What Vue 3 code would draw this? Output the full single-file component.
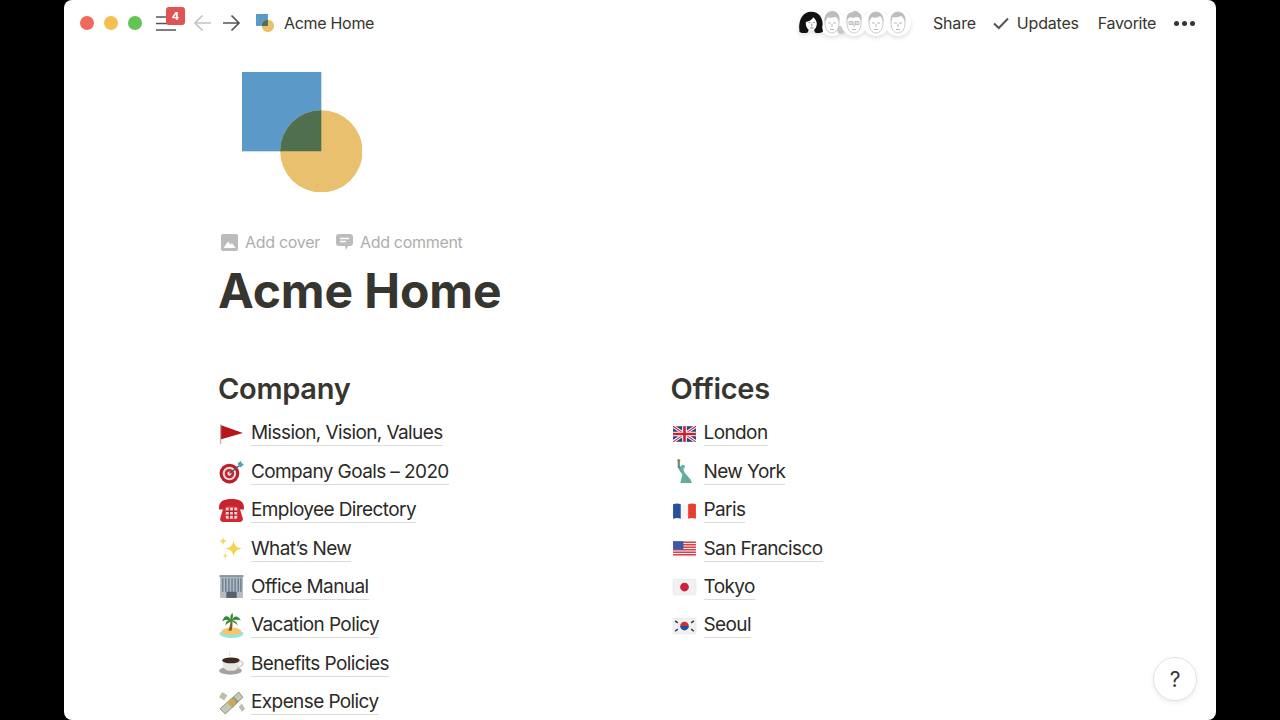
<script setup>
const company = [
  { icon: "flag", label: "Mission, Vision, Values" },
  { icon: "target", label: "Company Goals – 2020" },
  { icon: "phone", label: "Employee Directory" },
  { icon: "sparkles", label: "What’s New" },
  { icon: "office", label: "Office Manual" },
  { icon: "island", label: "Vacation Policy" },
  { icon: "coffee", label: "Benefits Policies" },
  { icon: "money", label: "Expense Policy" },
];

const offices = [
  { icon: "uk", label: "London" },
  { icon: "liberty", label: "New York" },
  { icon: "fr", label: "Paris" },
  { icon: "us", label: "San Francisco" },
  { icon: "jp", label: "Tokyo" },
  { icon: "kr", label: "Seoul" },
];

const columns = [
  { title: "Company", items: company },
  { title: "Offices", items: offices },
];

// hair outline of the four grey portraits
const hair = [
  "M7 13C5 6 10 2 14 2c5 0 9 4 7 11-1-3-2-5-4-5-3 1-6 1-7 0-1 1-2 3-3 5Z",
  "M7 11C6 6 9 3 12 4c2-3 6-2 7 0 3 1 3 5 2 8-1-2-2-4-4-4-3 1-6 1-7 0-1 1-2 2-3 3Z",
  "M7 13C6 6 10 3 14 3c5 0 8 4 7 10-1-3-1-5-3-6-2 2-7 2-8 1-1 1-2 3-3 5Z",
  "M7 13C6 6 10 3 14 3c5 0 8 4 7 10-1-3-2-5-4-6-2 1-6 2-8 1-1 1-1 3-2 5Z",
];
</script>

<template>
  <div class="window">
    <header class="topbar">
      <div class="lights">
        <span class="light light_red"></span>
        <span class="light light_yellow"></span>
        <span class="light light_green"></span>
      </div>
      <div class="menu">
        <svg width="20" height="16" viewBox="0 0 20 16">
          <path d="M0 1h13M0 7.500h13M0 14h20" stroke="#555" stroke-width="1.600" fill="none" />
        </svg>
        <span class="badge">4</span>
      </div>
      <svg class="arrow" width="20" height="18" viewBox="0 0 20 18">
        <path d="M18 9H2M9.500 1.500 2 9l7.500 7.500" stroke="#c4c4c4" stroke-width="1.700" fill="none" />
      </svg>
      <svg class="arrow arrow_next" width="20" height="18" viewBox="0 0 20 18">
        <path d="M2 9h16M10.500 1.500 18 9l-7.500 7.500" stroke="#555" stroke-width="1.700" fill="none" />
      </svg>
      <svg class="page-icon" width="20" height="18" viewBox="0 0 121 121">
        <rect width="80" height="80" fill="#5b99c9" />
        <circle cx="80" cy="80" r="41.500" fill="#e9c06e" />
        <path d="M80 38.500V80H38.500A41.500 41.500 0 0 1 80 38.500Z" fill="#4f6f4f" />
      </svg>
      <span class="crumb">Acme Home</span>

      <div class="avatars">
        <svg class="avatar avatar_first" width="28" height="28" viewBox="-3 -1 31 31">
          <path d="M1 24C-1 14 3 2 14 2c10 0 14 10 12 17 0 2 1 4 1 5-3 2-7 2-9 1l-1-3h-6l-1 3c-3 1-7 1-10-1Z" fill="#111" />
          <path d="M8 13c2 0 6-1 8-5 2 2 4 4 4 7 0 5-3 8-6 8s-7-4-6-10Z" fill="#fff" />
          <path d="M11 14h2M16 14h2M14.500 15v3M12.500 20h4" stroke="#666" stroke-width=".8" fill="none" />
        </svg>
        <svg v-for="(d, i) in hair" :key="d" class="avatar" width="28" height="28" viewBox="0 0 28 28">
          <circle cx="14" cy="14" r="13" fill="#fff" />
          <circle v-if="i === 0" cx="23" cy="21" r="4" fill="#c9c9c9" />
          <path d="M7 14c-1-9 4-11 7-11s8 2 7 11c0 6-3 10-7 10s-7-4-7-10Z" fill="#fff" stroke="#bdbdbd" stroke-width=".8" />
          <path :d="d" fill="#bdbdbd" />
          <path d="M10 14h3M15 14h3M14 15v3M12 20.500h4" stroke="#a8a8a8" stroke-width=".8" fill="none" />
          <path v-if="i === 1" d="M9 12.500h4v3H9ZM15 12.500h4v3h-4Z" stroke="#a8a8a8" stroke-width=".7" fill="none" />
        </svg>
      </div>
      <span class="action action_share">Share</span>
      <svg class="check" width="16" height="13" viewBox="0 0 16 13">
        <path d="M1 6.500 5.800 11 15 1.500" stroke="#555" stroke-width="2" fill="none" />
      </svg>
      <span class="action action_updates">Updates</span>
      <span class="action action_favorite">Favorite</span>
      <div class="dots"><i></i><i></i><i></i></div>
    </header>

    <main class="page">
      <svg class="page-logo" width="121" height="121" viewBox="0 0 121 121">
        <rect width="80" height="80" fill="#5b99c9" />
        <circle cx="80" cy="80" r="41.500" fill="#e9c06e" />
        <path d="M80 38.500V80H38.500A41.500 41.500 0 0 1 80 38.500Z" fill="#4f6f4f" />
      </svg>

      <div class="page-tools">
        <span class="tool">
          <svg width="17" height="17" viewBox="0 0 17 17">
            <rect width="17" height="17" rx="2" fill="#bcbcbc" />
            <path d="M2.500 14 7 7.500l2.500 3L11 9l3.500 5Z" fill="#fff" />
          </svg>
          Add cover
        </span>
        <span class="tool">
          <svg width="17" height="17" viewBox="0 0 17 17">
            <path d="M3 0h11a3 3 0 0 1 3 3v6a3 3 0 0 1-3 3h-2l-2 4-1-4H3a3 3 0 0 1-3-3V3a3 3 0 0 1 3-3Z" fill="#bcbcbc" />
            <path d="M4 4.500h9M4 7.500h6" stroke="#fff" stroke-width="1.400" />
          </svg>
          Add comment
        </span>
      </div>

      <h1 class="title">Acme Home</h1>

      <div class="columns">
        <section v-for="col in columns" :key="col.title" class="column">
          <h2 class="heading">{{ col.title }}</h2>
          <ul class="links">
            <li v-for="item in col.items" :key="item.label" class="link">
              <svg class="emoji" width="27" height="27" viewBox="0 0 26 26">
                <template v-if="item.icon === 'flag'">
                  <path d="M2.500 4v19" stroke="#aaa" stroke-width="1" />
                  <path d="M3 5 24 12.500 3 18.500Z" fill="#b8151b" />
                </template>
                <template v-else-if="item.icon === 'target'">
                  <circle cx="11" cy="15" r="9.500" fill="#b71f2a" />
                  <circle cx="11" cy="15" r="6.500" fill="#f1dcd8" />
                  <circle cx="11" cy="15" r="4.500" fill="#c22632" />
                  <circle cx="11" cy="15" r="2" fill="#f1dcd8" />
                  <path d="M11 15 21 7" stroke="#555" stroke-width="1.200" />
                  <path d="m19 5 3-2 1 2 2 1-3 3-2-1Z" fill="#4ba6b8" />
                </template>
                <template v-else-if="item.icon === 'phone'">
                  <path d="M1 10C1 4 6 2 13 2s12 2 12 8v2h-5l-1-3H7l-1 3H1Z" fill="#c9242d" />
                  <path d="M5 11 7 8h12l2 3 3 10c0 2-1 3-3 3H5c-2 0-3-1-3-3Z" fill="#cf2a33" />
                  <rect x="7.500" y="10" width="11" height="11" rx="1" fill="#f6d5d2" />
                  <path d="M11 10v11M15 10v11M7.500 13.700h11M7.500 17.400h11" stroke="#b3202a" stroke-width="1.300" />
                </template>
                <template v-else-if="item.icon === 'sparkles'">
                  <path d="M15 5c.8 5 2.500 7 8 8-5.500 1-7.200 3-8 8-.8-5-2.500-7-8-8 5.500-1 7.200-3 8-8Z" fill="#f7d352" />
                  <path d="M5 2c.4 2.500 1.200 3.300 3.500 4C6.200 6.700 5.400 7.500 5 10c-.4-2.500-1.200-3.300-3.500-4C3.800 5.300 4.600 4.500 5 2Z" fill="#f6d863" />
                  <path d="M7 17c.3 2 1 2.700 2.500 3C8 20.300 7.300 21 7 23c-.3-2-1-2.700-2.500-3C6 19.700 6.700 19 7 17Z" fill="#f6d863" />
                </template>
                <template v-else-if="item.icon === 'office'">
                  <rect x="2" y="3" width="22" height="21" fill="#b4bcc3" />
                  <rect x="1.500" y="2" width="23" height="2" fill="#8a949c" />
                  <path d="M4.500 5v13M7.500 5v13M10.500 5v13M13.500 5v13M16.500 5v13M19.500 5v13M22 5v13" stroke="#6d8296" stroke-width="1.500" />
                  <rect x="8" y="18" width="10" height="6" fill="#55626e" />
                </template>
                <template v-else-if="item.icon === 'island'">
                  <ellipse cx="13" cy="21" rx="11.500" ry="4" fill="#9be3de" />
                  <ellipse cx="13" cy="18.500" rx="9.500" ry="3.500" fill="#f3c76a" />
                  <path d="M12 9c0 3-1 6-2 9h3c1-3 1-6 1-9Z" fill="#8a5a2c" />
                  <path d="M13 9C10 2 6 3 4 9c3-2 6-2 9 0Zm0 0c2-6 6-6 9-1-3-1-6-1-9 1Zm0 0C10 7 8 8 7 13c2-2 4-3 6-4Zm0 0c3-1 5 0 6 4-2-2-4-3-6-4Zm0 0c-2-4-1-6 1-8 1 3 0 6-1 8Z" fill="#2f8a34" />
                </template>
                <template v-else-if="item.icon === 'coffee'">
                  <ellipse cx="12" cy="20" rx="11" ry="3.800" fill="#a3a3a0" />
                  <path d="M4 10h17c0 6-2 10-8.500 10S4 16 4 10Z" fill="#e8e6e2" />
                  <ellipse cx="12.500" cy="10" rx="8.500" ry="2.800" fill="#3a2a22" />
                  <path d="M20 11c4-1 5 2 3 4s-3 2-5 2" stroke="#cfcdc9" stroke-width="1.400" fill="none" />
                  <path d="M11 2c-1 1 1 2 0 4" stroke="#e4e4e4" stroke-width="1" fill="none" />
                </template>
                <template v-else-if="item.icon === 'money'">
                  <path d="M1 8 4 3l5 3-3 5ZM20 17l3-3 3 5-3 3Z" fill="#b8c0ae" />
                  <path d="M20 3 24 8 7 24l-5-5Z" fill="#c4c9b4" stroke="#6f7a63" stroke-width=".7" />
                  <path d="m10 12 5-5 5 5-6 6Z" fill="#8f9c80" />
                  <circle cx="13.500" cy="13" r="3.500" fill="#cda94f" />
                </template>
                <template v-else-if="item.icon === 'uk'">
                  <rect x="2" y="6" width="22" height="15" fill="#2b3f87" />
                  <path d="m2 6 22 15M24 6 2 21" stroke="#fff" stroke-width="3" />
                  <path d="m2 6 22 15M24 6 2 21" stroke="#c8202f" stroke-width="1" />
                  <path d="M13 6v15M2 13.500h22" stroke="#fff" stroke-width="4.500" />
                  <path d="M13 6v15M2 13.500h22" stroke="#c8202f" stroke-width="2.500" />
                </template>
                <template v-else-if="item.icon === 'liberty'">
                  <path d="M7 8h4l2 6 6 7 1 3H9l2-8-3-4Z" fill="#63ad9f" />
                  <path d="M7.500 2v8" stroke="#4a8f84" stroke-width="2" />
                  <circle cx="7.500" cy="2.500" r="1.500" fill="#8a8a50" />
                  <circle cx="11.500" cy="8.500" r="2" fill="#6db5a8" />
                </template>
                <template v-else-if="item.icon === 'fr'">
                  <path d="M2 7c3-1 5-1 7.500 0v14C7 20 5 20 2 21Z" fill="#2a4f9c" />
                  <path d="M9.500 7c2 .7 4 .7 7 0v14c-3 .7-5 .7-7 0Z" fill="#f5f5f5" />
                  <path d="M16.500 7c3-1 5-1 7.500 0v14c-2.500-1-4.500-1-7.500 0Z" fill="#e63e30" />
                </template>
                <template v-else-if="item.icon === 'us'">
                  <rect x="2" y="6" width="22" height="15" fill="#f3f3f3" />
                  <path d="M2 7h22M2 9.400h22M2 11.800h22M2 14.200h22M2 16.600h22M2 19h22" stroke="#d9414a" stroke-width="1.300" />
                  <rect x="2" y="6" width="10" height="8" fill="#3d5aa8" />
                </template>
                <template v-else-if="item.icon === 'jp'">
                  <rect x="2" y="6" width="22" height="15" rx="1" fill="#f1f1f1" stroke="#dedede" stroke-width=".5" />
                  <circle cx="13" cy="13.500" r="4.200" fill="#d01f3c" />
                </template>
                <template v-else>
                  <rect x="2" y="6" width="22" height="15" rx="1" fill="#f1f1f1" stroke="#dedede" stroke-width=".5" />
                  <path d="M8.800 13.500a4.200 4.200 0 0 1 8.400 0Z" fill="#cd2e3a" />
                  <path d="M8.800 13.500a4.200 4.200 0 0 0 8.400 0Z" fill="#1f4fa0" />
                  <path d="m4 8.500 2.500 2M22 8.500l-2.500 2M4 18.500l2.500-2M22 18.500l-2.500-2" stroke="#333" stroke-width="1.400" />
                </template>
              </svg>
              <span class="link-label">{{ item.label }}</span>
            </li>
          </ul>
        </section>
      </div>
    </main>

    <button class="help" type="button">?</button>
  </div>
</template>

<style>
html,
body {
  margin: 0;
  background: #000;
  overflow: hidden;
}
</style>

<style scoped>
.window {
  position: relative;
  box-sizing: border-box;
  width: 1152px;
  height: 720px;
  margin: 0 auto;
  overflow: hidden;
  border-radius: 8px;
  background: #fff;
  font-family: Inter, "Liberation Sans", sans-serif;
  color: #37352f;
}

.topbar {
  display: flex;
  align-items: center;
  height: 46px;
  padding: 0 21px 0 16px;
  color: #37352f;
  font-size: 16px;
}

.lights {
  display: flex;
  gap: 10px;
}

.light {
  width: 14px;
  height: 14px;
  border-radius: 50%;
}

.light_red {
  background: #ec6a5e;
}

.light_yellow {
  background: #f4bf4f;
}

.light_green {
  background: #61c554;
}

.menu {
  position: relative;
  display: flex;
  margin-left: 14px;
  padding-top: 2px;
}

.badge {
  position: absolute;
  top: -7px;
  left: 10px;
  width: 19px;
  height: 18px;
  border-radius: 3px;
  background: #df5452;
  color: #fff;
  font-size: 11px;
  font-weight: 700;
  line-height: 18px;
  text-align: center;
}

.arrow {
  margin-left: 17px;
}

.arrow_next {
  margin-left: 8px;
}

.page-icon {
  margin-left: 14px;
}

.crumb {
  margin-left: 9px;
  letter-spacing: -0.3px;
}

.avatars {
  display: flex;
  margin-left: auto;
  filter: drop-shadow(0 2px 2px rgba(0, 0, 0, 0.12));
}

.avatar {
  margin-left: -6px;
}

.avatar_first {
  position: relative;
  z-index: 1;
  margin-left: 0;
}

.action {
  letter-spacing: -0.2px;
}

.action_share {
  margin-left: 21px;
}

.check {
  margin-left: 17px;
}

.action_updates {
  margin-left: 8px;
}

.action_favorite {
  margin-left: 19px;
  letter-spacing: -0.3px;
}

.dots {
  display: flex;
  gap: 3px;
  margin-left: 18px;
}

.dots i {
  width: 5px;
  height: 5px;
  border-radius: 50%;
  background: #37352f;
}

.page {
  padding: 26px 0 0 154px;
}

.page-logo {
  display: block;
  width: 120px;
  height: 120px;
  margin-left: 24px;
}

.page-tools {
  display: flex;
  gap: 16px;
  margin-top: 40px;
  padding-left: 3px;
  color: #aeaeac;
  font-size: 16px;
  letter-spacing: -0.3px;
}

.tool {
  display: flex;
  align-items: center;
  gap: 7px;
  height: 20px;
}

.title {
  margin: 11px 0 0;
  color: #37352f;
  font-size: 48px;
  font-weight: 700;
  line-height: 56px;
  letter-spacing: -0.1px;
}

.columns {
  display: flex;
  margin-top: 52px;
}

.column {
  width: 452.500px;
  flex: none;
}

.heading {
  margin: 0;
  font-size: 29px;
  font-weight: 600;
  line-height: 36px;
  letter-spacing: -0.3px;
}

.links {
  margin: 7px 0 0;
  padding: 0;
  list-style: none;
}

.link {
  display: flex;
  align-items: center;
  height: 38.450px;
}

.emoji {
  flex: none;
  margin-right: 6px;
}

.link-label {
  border-bottom: 1px solid #dcdcdb;
  color: #2b2a27;
  font-size: 19px;
  line-height: 25px;
  letter-spacing: -0.6px;
}

.help {
  position: absolute;
  right: 19px;
  bottom: 19px;
  width: 44px;
  height: 44px;
  padding: 0;
  border: 1px solid #e3e3e2;
  border-radius: 50%;
  background: #fff;
  box-shadow: 0 2px 5px rgba(0, 0, 0, 0.08);
  color: #37352f;
  font-family: inherit;
  font-size: 21px;
}
</style>
